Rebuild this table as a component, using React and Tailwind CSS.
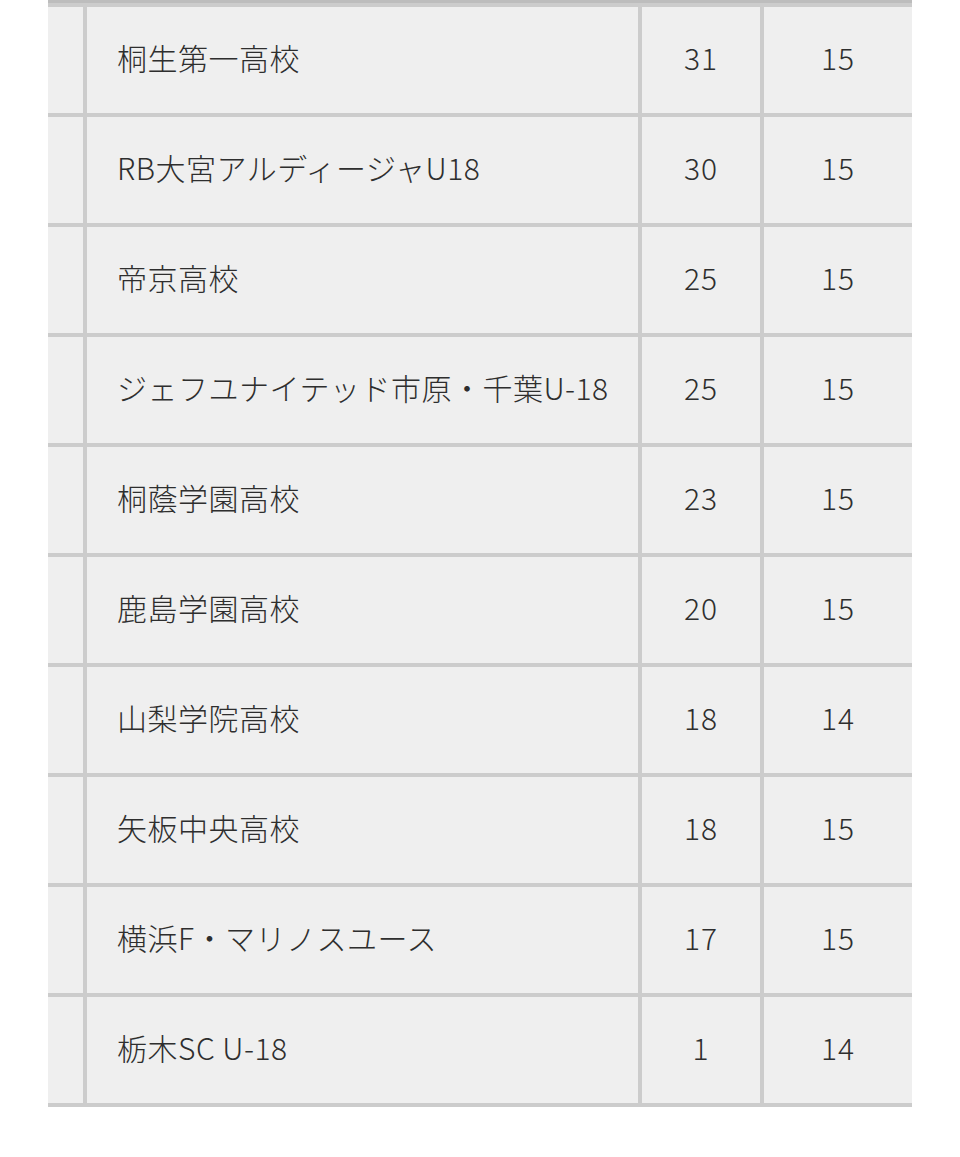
import React from 'react';

const rows = [
  { name: '桐生第一高校', a: '31', b: '15' },
  { name: 'RB大宮アルディージャU18', a: '30', b: '15' },
  { name: '帝京高校', a: '25', b: '15' },
  { name: 'ジェフユナイテッド市原・千葉U-18', a: '25', b: '15' },
  { name: '桐蔭学園高校', a: '23', b: '15' },
  { name: '鹿島学園高校', a: '20', b: '15' },
  { name: '山梨学院高校', a: '18', b: '14' },
  { name: '矢板中央高校', a: '18', b: '15' },
  { name: '横浜F・マリノスユース', a: '17', b: '15' },
  { name: '栃木SC U-18', a: '1', b: '14' },
];

export default function App() {
  return (
    <div className="min-h-[1157px] bg-white px-[48px]" style={{ fontFamily: '"Noto Sans CJK JP", "Noto Sans", sans-serif' }}>
      <div className="border-t-[3px] border-[#bdbdbd]">
        <div className="grid grid-cols-[35px_551px_118px_148px] gap-[4px] bg-[#cccccc] py-[4px] text-[30px] font-light text-[#2e2e2e]">
          {rows.map((r, i) => (
            <React.Fragment key={i}>
              <div className="h-[106px] bg-[#efefef]" />
              <div className="h-[106px] bg-[#efefef] flex items-center pl-[30px] pb-[6px] whitespace-nowrap tracking-[0.5px]">{r.name}</div>
              <div className="h-[106px] bg-[#efefef] flex items-center justify-center pb-[6px] tracking-[1px]">{r.a}</div>
              <div className="h-[106px] bg-[#efefef] flex items-center justify-center pb-[6px] tracking-[1px]">{r.b}</div>
            </React.Fragment>
          ))}
        </div>
      </div>
    </div>
  );
}
